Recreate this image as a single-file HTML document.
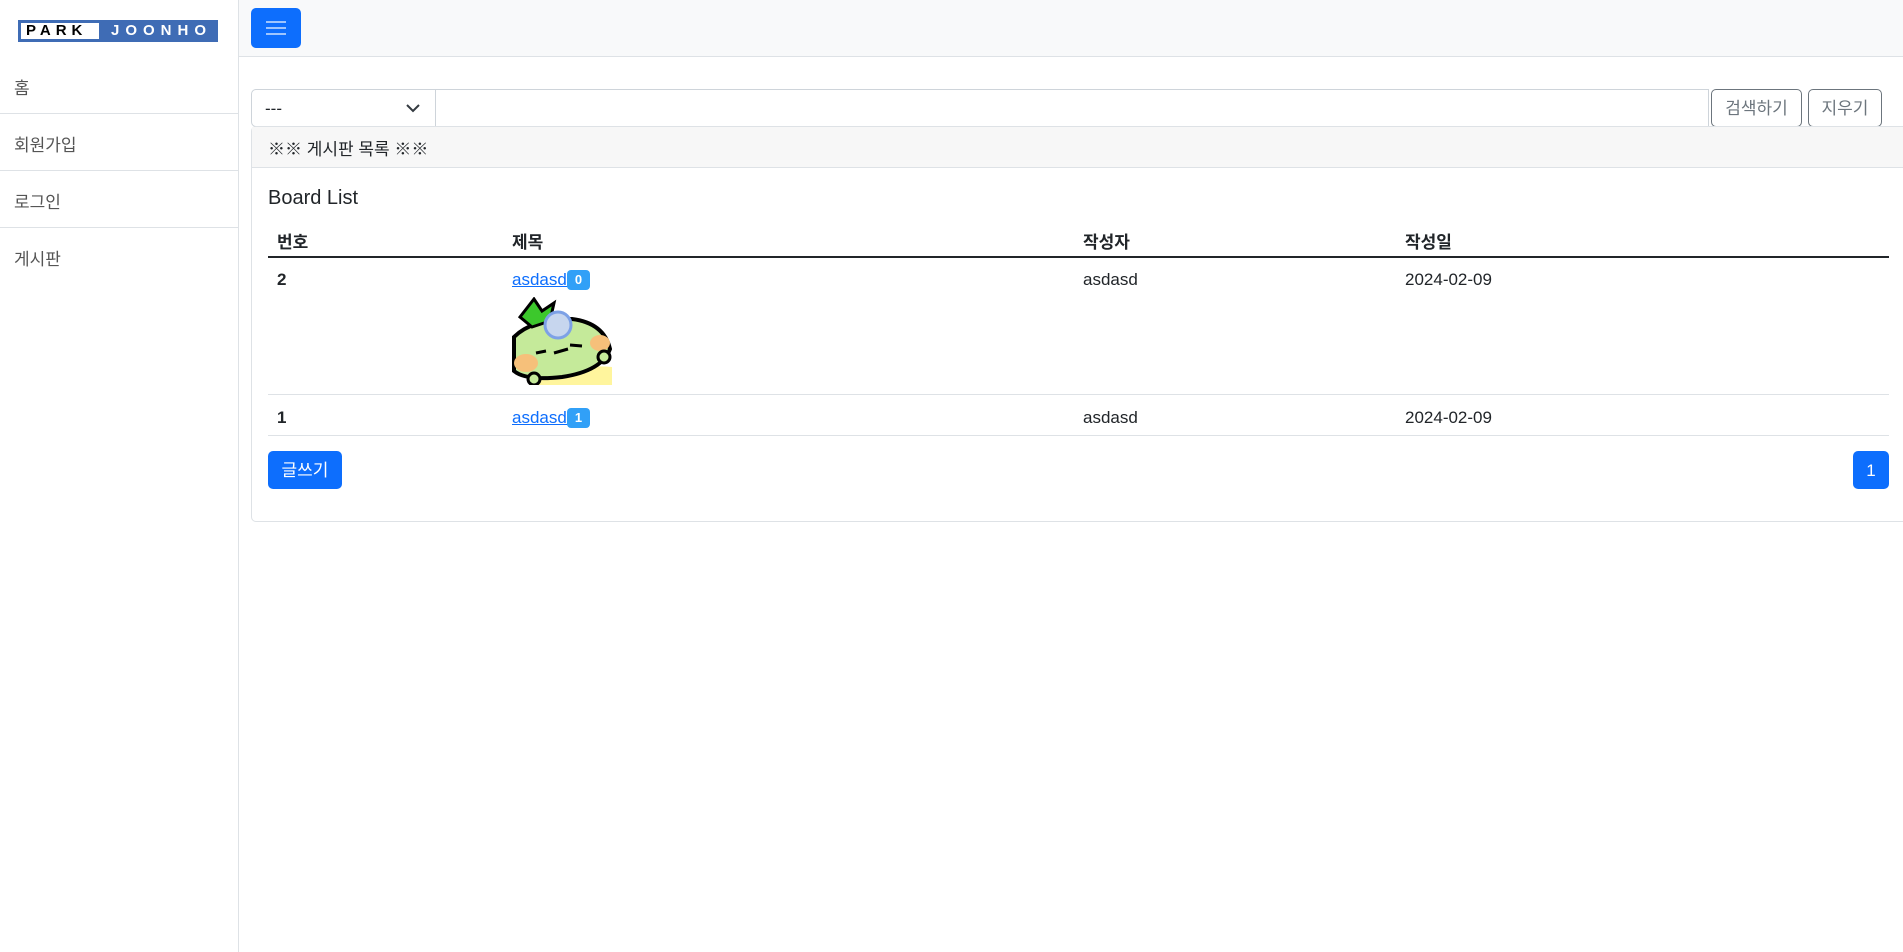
<!DOCTYPE html>
<html><head><meta charset="utf-8"><style>
*{box-sizing:border-box;margin:0;padding:0}
body{width:1903px;height:952px;overflow:hidden;background:#fff;font-family:"Liberation Sans","Noto Sans CJK KR",sans-serif;color:#212529;font-size:18px;position:relative}
.side{position:absolute;left:0;top:0;width:239px;height:952px;border-right:1px solid #dee2e6;background:#fff}
.top{position:absolute;left:0;top:0;width:1903px;height:57px;background:#f8f9fa;border-bottom:1px solid #dee2e6}
.logo{position:absolute;left:18px;top:20px;width:200px;height:22px;background:#3f6cb5;overflow:hidden}
.logo .p{position:absolute;left:3px;top:3px;background:#fff;width:78px;height:16px;color:#000;font-weight:bold;font-size:15px;letter-spacing:5px;line-height:16px;padding-left:5px}
.logo .j{position:absolute;left:93px;top:2px;color:#fff;font-weight:bold;font-size:15px;letter-spacing:6px;line-height:18px}
.ham{position:absolute;left:251px;top:8px;width:50px;height:40px;background:#0d6efd;border-radius:5px}
.ham i{position:absolute;left:15px;width:20px;height:2px;background:#9ec5fe}
.nav{position:absolute;left:0;width:238px;height:57px;border-bottom:1px solid #dee2e6;padding-left:14px;padding-top:3px;line-height:57px;color:#555;font-size:17px}
.abs{position:absolute}
.btn{position:absolute;border:1px solid #6c757d;border-radius:5px;color:#6c757d;text-align:center;font-size:17px}
.t{font-size:17px}
.b{font-weight:bold}
.badge{position:absolute;width:23px;height:20px;background:#31a0f7;border-radius:4px;color:#fff;font-weight:bold;font-size:13px;text-align:center;line-height:20px}
</style></head><body>
<div class="top"></div>
<div class="side"></div>
<div class="logo"><span class="p">PARK</span><span class="j">JOONHO</span></div>
<div class="ham"><i style="top:13px"></i><i style="top:19px"></i><i style="top:25px"></i></div>
<div class="nav" style="top:57px">홈</div>
<div class="nav" style="top:114px">회원가입</div>
<div class="nav" style="top:171px">로그인</div>
<div class="nav" style="top:228px;border-bottom:none">게시판</div>

<div class="abs" style="left:251px;top:89px;width:185px;height:38px;border:1px solid #ced4da;border-radius:5px 0 0 5px;padding-left:13px;line-height:38px;font-size:17px">---
<svg class="abs" style="left:154px;top:13px" width="14" height="10" viewBox="0 0 14 10"><path d="M1 2l6 6 6-6" fill="none" stroke="#343a40" stroke-width="2"/></svg></div>
<div class="abs" style="left:435px;top:89px;width:1274px;height:38px;border:1px solid #ced4da;border-left:none"></div>
<div class="btn" style="left:1711px;top:89px;width:91px;height:38px;line-height:38px">검색하기</div>
<div class="btn" style="left:1808px;top:89px;width:74px;height:38px;line-height:38px">지우기</div>

<div class="abs" style="left:251px;top:126px;width:1700px;height:396px;border:1px solid #dee2e6;border-radius:5px"></div>
<div class="abs" style="left:252px;top:127px;width:1700px;height:41px;background:#f7f7f7;border-bottom:1px solid #dee2e6;padding-left:16px;padding-top:3px;line-height:40px;font-size:17px">※※ 게시판 목록 ※※</div>
<div class="abs" style="left:268px;top:187px;font-size:20px">Board List</div>

<div class="abs t b" style="left:277px;top:228px">번호</div>
<div class="abs t b" style="left:512px;top:228px">제목</div>
<div class="abs t b" style="left:1083px;top:228px">작성자</div>
<div class="abs t b" style="left:1405px;top:228px">작성일</div>
<div class="abs" style="left:268px;top:256px;width:1621px;height:2px;background:#212529"></div>

<div class="abs t b" style="left:277px;top:270px">2</div>
<div class="abs t" style="left:512px;top:270px;color:#0d6efd;text-decoration:underline">asdasd&nbsp;</div>
<div class="badge" style="left:567px;top:270px">0</div>
<svg class="abs" style="left:512px;top:297px" width="100" height="88" viewBox="0 0 100 88">
<rect width="100" height="88" fill="#fff"/><path d="M20 88 Q60 66 100 70 L100 88Z" fill="#fff59d"/>
<path d="M2 40 Q20 22 60 22 Q92 26 98 52 Q90 74 50 80 Q14 84 2 74Z" fill="#c5ea9a" stroke="#000" stroke-width="4"/>
<path d="M8 20 L22 2 L30 14 L42 6 L38 24 L20 30Z" fill="#3cc82c" stroke="#000" stroke-width="3"/>
<circle cx="46" cy="28" r="13" fill="#c7d6ee" stroke="#7da1e6" stroke-width="3"/>
<ellipse cx="14" cy="66" rx="12" ry="9" fill="#f6c07a"/><ellipse cx="88" cy="46" rx="10" ry="8" fill="#f6c07a"/>
<path d="M24 56l10-2M42 56l14-4M58 48l12 1" stroke="#000" stroke-width="3"/>
<circle cx="92" cy="60" r="6" fill="#c5ea9a" stroke="#000" stroke-width="3"/><circle cx="22" cy="82" r="6" fill="#c5ea9a" stroke="#000" stroke-width="3"/>
</svg>
<div class="abs" style="left:268px;top:394px;width:1621px;height:1px;background:#dee2e6"></div>
<div class="abs t b" style="left:277px;top:408px">1</div>
<div class="abs t" style="left:512px;top:408px;color:#0d6efd;text-decoration:underline">asdasd&nbsp;</div>
<div class="badge" style="left:567px;top:408px">1</div>
<div class="abs t" style="left:1083px;top:270px">asdasd</div>
<div class="abs t" style="left:1405px;top:270px">2024-02-09</div>
<div class="abs t" style="left:1083px;top:408px">asdasd</div>
<div class="abs t" style="left:1405px;top:408px">2024-02-09</div>
<div class="abs" style="left:268px;top:435px;width:1621px;height:1px;background:#dee2e6"></div>

<div class="abs" style="left:268px;top:451px;width:74px;height:38px;background:#0d6efd;border-radius:5px;color:#fff;text-align:center;line-height:40px;font-size:17px">글쓰기</div>
<div class="abs" style="left:1853px;top:451px;width:36px;height:38px;background:#0d6efd;border-radius:5px;color:#fff;text-align:center;line-height:40px;font-size:17px">1</div>
</body></html>
